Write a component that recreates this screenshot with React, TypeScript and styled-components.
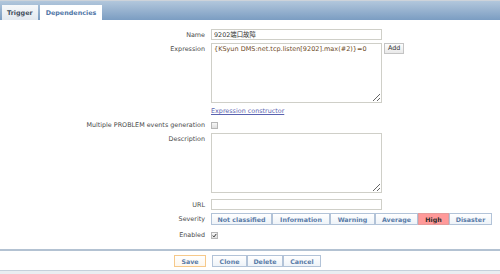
import React from "react";
import styled, { createGlobalStyle } from "styled-components";

const GlobalStyle = createGlobalStyle`
  html, body { margin: 0; padding: 0; background: #ffffff; }
  body { font-family: "DejaVu Sans", "Noto Sans CJK SC", sans-serif; }
  * { box-sizing: border-box; }
`;

const Page = styled.div`
  width: 500px;
  height: 274px;
  display: flex;
  flex-direction: column;
  overflow: hidden;
  font-size: 6.4px;
  color: #444;
`;

const TabBar = styled.div`
  height: 20px;
  border-top: 1px solid #cdd3da;
  background: linear-gradient(to bottom, #b2c7dc 0%, #97b2cf 50%, #7b9dc2 100%);
  display: flex;
  align-items: flex-end;
  padding-left: 2px;
  gap: 2px;
`;

const Tab = styled.div<{ $active?: boolean }>`
  height: 15px;
  display: flex;
  align-items: center;
  padding: 0 ${(p) => (p.$active ? "5px" : "6px")};
  font-weight: bold;
  font-size: 6.4px;
  color: ${(p) => (p.$active ? "#3f4d5c" : "#4f75a6")};
  background: ${(p) =>
    p.$active ? "linear-gradient(to bottom, #f6f8fa, #e2e8ef)" : "#ffffff"};
`;

const Form = styled.div`
  display: flex;
  flex-direction: column;
  padding-top: 9px;
`;

const Row = styled.div<{ $mt?: number }>`
  display: grid;
  grid-template-columns: 205px 1fr;
  column-gap: 6px;
  margin-top: ${(p) => p.$mt ?? 0}px;
`;

const Label = styled.div<{ $top?: boolean }>`
  text-align: right;
  line-height: 10px;
  color: #4a4a4a;
  white-space: nowrap;
  align-self: ${(p) => (p.$top ? "start" : "center")};
  padding-top: ${(p) => (p.$top ? "1px" : "0")};
`;

const Field = styled.div`
  display: flex;
  align-items: flex-start;
  gap: 2px;
`;

const TextInput = styled.input`
  width: 171px;
  height: 11px;
  border: 1px solid #cfcfc8;
  padding: 0 2px;
  margin: 0;
  font-family: "DejaVu Sans", "Noto Sans CJK SC", sans-serif;
  font-size: 6.4px;
  color: #333;
  outline: none;
  background: #fff;
`;

const TextArea = styled.textarea<{ $color?: string }>`
  width: 171px;
  height: 60px;
  border: 1px solid #cfcfc8;
  padding: 1px 2px;
  margin: 0;
  font-family: "DejaVu Sans", "Noto Sans CJK SC", sans-serif;
  font-size: 6.5px;
  line-height: 9px;
  color: ${(p) => p.$color ?? "#333"};
  outline: none;
  resize: both;
  background: #fff;
  display: block;
`;

const SmallButton = styled.button`
  height: 11px;
  padding: 0 3px;
  margin: 0;
  font-family: "DejaVu Sans", sans-serif;
  font-size: 6.4px;
  color: #333;
  border: 1px solid #c4c4c4;
  background: linear-gradient(to bottom, #fdfdfd, #e9e9e9);
  line-height: 9px;
`;

const Link = styled.a`
  color: #5a63b0;
  text-decoration: underline;
  line-height: 10px;
  cursor: pointer;
`;

const CheckBox = styled.span<{ $checked?: boolean }>`
  width: 7px;
  height: 7px;
  border: 1px solid #b6b6b6;
  background: linear-gradient(to bottom, #f7f7f7, #dedede);
  display: flex;
  align-items: center;
  justify-content: center;
  align-self: center;
`;

const CheckCell = styled.div`
  display: flex;
  align-items: center;
  height: 10px;
`;

const SeverityGroup = styled.div`
  display: flex;
  height: 12px;
`;

const SevButton = styled.div<{ $w: number; $selected?: boolean }>`
  width: ${(p) => p.$w}px;
  height: 12px;
  display: flex;
  align-items: center;
  justify-content: center;
  font-weight: bold;
  font-size: 6.3px;
  white-space: nowrap;
  color: ${(p) => (p.$selected ? "#2a2a2a" : "#5a7ca8")};
  border: 1px solid ${(p) => (p.$selected ? "#e39a9a" : "#b2c3d8")};
  background: ${(p) =>
    p.$selected ? "#ff9999" : "linear-gradient(to bottom, #ffffff, #eef3f8)"};
`;

const Separator = styled.div`
  margin-top: 9px;
  height: 2px;
  background: #b3c2d2;
`;

const ButtonBar = styled.div`
  display: flex;
  justify-content: center;
  align-items: center;
  gap: 6px;
  padding: 3px 5px 0 0;
  height: 17px;
`;

const ButtonGroup = styled.div`
  display: flex;
`;

const FormButton = styled.div<{ $w: number; $primary?: boolean }>`
  width: ${(p) => p.$w}px;
  height: 12px;
  display: flex;
  align-items: center;
  justify-content: center;
  font-weight: bold;
  font-size: 6.3px;
  color: #5a7ca8;
  border: 1px solid ${(p) => (p.$primary ? "#f6c98a" : "#b2c3d8")};
  background: ${(p) =>
    p.$primary ? "linear-gradient(to bottom, #ffffff, #fdf7ee)" : "linear-gradient(to bottom, #ffffff, #eef3f8)"};
`;

const BottomStrip = styled.div`
  flex: 1;
  margin-top: 2px;
  border-top: 1px solid #c5d0db;
  background: #e9edf1;
`;

const Check = () => (
  <svg width="5" height="5" viewBox="0 0 10 10">
    <path d="M1.5 5.2 L4 7.8 L8.6 1.8" fill="none" stroke="#333" strokeWidth="2" />
  </svg>
);

const severities: { name: string; w: number; selected?: boolean }[] = [
  { name: "Not classified", w: 61 },
  { name: "Information", w: 58 },
  { name: "Warning", w: 45 },
  { name: "Average", w: 43 },
  { name: "High", w: 31, selected: true },
  { name: "Disaster", w: 43 },
];

export default function App() {
  return (
    <Page>
      <GlobalStyle />
      <TabBar>
        <Tab $active>Trigger</Tab>
        <Tab>Dependencies</Tab>
      </TabBar>
      <Form>
        <Row>
          <Label>Name</Label>
          <Field>
            <TextInput defaultValue="9202端口故障" />
          </Field>
        </Row>
        <Row $mt={3}>
          <Label $top>Expression</Label>
          <Field>
            <TextArea $color="#6e4a26" defaultValue="{KSyun DMS:net.tcp.listen[9202].max(#2)}=0" />
            <SmallButton>Add</SmallButton>
          </Field>
        </Row>
        <Row $mt={3}>
          <span />
          <Field>
            <Link>Expression constructor</Link>
          </Field>
        </Row>
        <Row $mt={4}>
          <Label>Multiple PROBLEM events generation</Label>
          <CheckCell>
            <CheckBox />
          </CheckCell>
        </Row>
        <Row $mt={3}>
          <Label $top>Description</Label>
          <Field>
            <TextArea />
          </Field>
        </Row>
        <Row $mt={6}>
          <Label>URL</Label>
          <Field>
            <TextInput />
          </Field>
        </Row>
        <Row $mt={3}>
          <Label>Severity</Label>
          <SeverityGroup>
            {severities.map((s) => (
              <SevButton key={s.name} $w={s.w} $selected={s.selected}>
                {s.name}
              </SevButton>
            ))}
          </SeverityGroup>
        </Row>
        <Row $mt={5}>
          <Label>Enabled</Label>
          <CheckCell>
            <CheckBox $checked>
              <Check />
            </CheckBox>
          </CheckCell>
        </Row>
      </Form>
      <Separator />
      <ButtonBar>
        <FormButton $w={32} $primary>Save</FormButton>
        <ButtonGroup>
          <FormButton $w={35}>Clone</FormButton>
          <FormButton $w={36}>Delete</FormButton>
          <FormButton $w={38}>Cancel</FormButton>
        </ButtonGroup>
      </ButtonBar>
      <BottomStrip />
    </Page>
  );
}
